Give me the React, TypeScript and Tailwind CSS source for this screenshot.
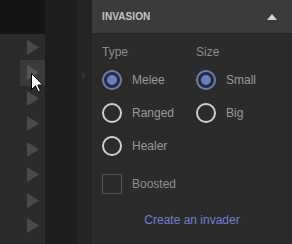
import { useState } from "react";

const font = { fontFamily: '"Liberation Sans", Arial, sans-serif' };

function Arrow({ color = "#4a4a4a" }: { color?: string }) {
  return (
    <svg width="12" height="15" viewBox="0 0 12 15">
      <polygon points="0,0 12,7.5 0,15" fill={color} />
    </svg>
  );
}

function Radio({ checked, label }: { checked: boolean; label: string }) {
  return (
    <div className="flex items-center h-[20px]">
      <div
        className={
          "w-[20px] h-[20px] rounded-full border-2 flex items-center justify-center " +
          (checked ? "border-[#6b7bc8]" : "border-[#cfcfcf]")
        }
      >
        {checked && <div className="w-[10px] h-[10px] rounded-full bg-[#6b7bc8]" />}
      </div>
      <span className="ml-[10px] text-[12px] leading-[14px] text-[#9a9a9a]">{label}</span>
    </div>
  );
}

export default function App() {
  const [open] = useState(true);
  const rows = [0, 1, 2, 3, 4, 5, 6, 7];

  return (
    <div className="relative flex w-[292px] h-[244px] overflow-hidden bg-[#2b2b2b]" style={font}>
      {/* left list */}
      <div className="w-[45px] flex flex-col">
        <div className="h-[34px] bg-[#141414] shrink-0" />
        <div className="flex-1 bg-[#2b2b2b] pt-[0.5px]">
          {rows.map((r) => (
            <div
              key={r}
              className={
                "ml-[20px] w-[25px] h-[25.5px] flex items-center justify-center " +
                (r === 1 ? "bg-[#3b3b3b]" : "")
              }
            >
              <Arrow color={r === 1 ? "#555555" : "#4a4a4a"} />
            </div>
          ))}
        </div>
      </div>

      <div className="w-[32px] bg-[#1d1d1d]" />

      <div className="w-[15px] bg-[#242424] pt-[72px] pl-[5px]">
        <svg width="5" height="7" viewBox="0 0 5 7">
          <polygon points="0,0 5,3.5 0,7" fill="#333333" />
        </svg>
      </div>

      {/* panel */}
      <div className="flex-1 flex flex-col bg-[#2b2b2b]">
        <div className="h-[34px] bg-[#3b3b3b] border-b border-[#242424] flex items-center justify-between pl-[10px] pr-[15px] shrink-0">
          <span className="text-[10px] font-bold text-[#c4c4c4] tracking-[0.1px]">INVASION</span>
          {open && (
            <svg width="10" height="6" viewBox="0 0 10 6">
              <polygon points="0,6 5,0 10,6" fill="#d4d4d4" />
            </svg>
          )}
        </div>

        <div className="pl-[10px] pt-[11px]">
          <div className="flex">
            <div className="w-[94px] flex flex-col">
              <span className="text-[12px] leading-[14px] text-[#8e8e8e]">Type</span>
              <div className="flex flex-col gap-[13px] mt-[11px]">
                <Radio checked label="Melee" />
                <Radio checked={false} label="Ranged" />
                <Radio checked={false} label="Healer" />
              </div>
            </div>
            <div className="flex flex-col">
              <span className="text-[12px] leading-[14px] text-[#8e8e8e]">Size</span>
              <div className="flex flex-col gap-[13px] mt-[11px]">
                <Radio checked label="Small" />
                <Radio checked={false} label="Big" />
              </div>
            </div>
          </div>

          <div className="flex items-center mt-[18px] h-[20px]">
            <div className="w-[20px] h-[20px] border border-[#555555]" />
            <span className="ml-[10px] text-[12px] leading-[14px] text-[#8e8e8e]">Boosted</span>
          </div>
        </div>

        <div className="mt-[19px] text-center text-[12px] leading-[14px] text-[#6f80cf]">
          Create an invader
        </div>
      </div>

      {/* mouse cursor */}
      <svg className="absolute left-[31px] top-[73px]" width="13" height="20" viewBox="0 0 13 20">
        <path
          d="M0.5,0.5 L0.5,16.5 L4.5,12.8 L7.2,18.8 L9.4,17.8 L6.8,12 L11.8,12 Z"
          fill="#ffffff"
          stroke="#000000"
          strokeWidth="1"
          strokeLinejoin="round"
        />
      </svg>
    </div>
  );
}
